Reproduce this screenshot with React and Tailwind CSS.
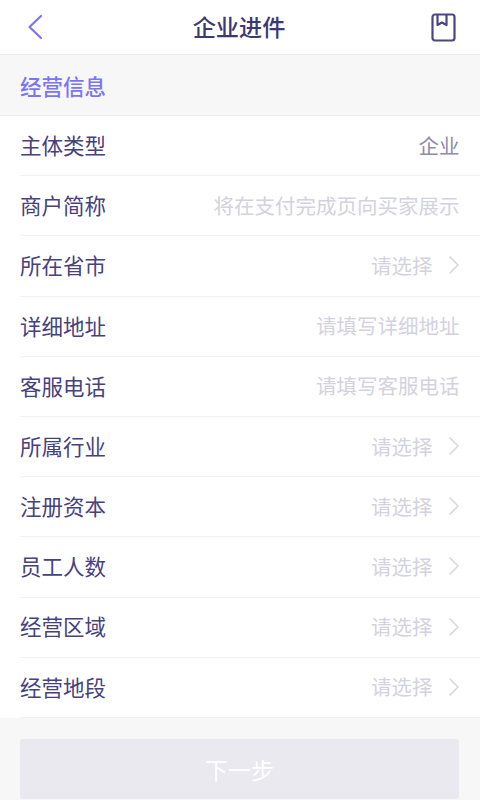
const rows = [
  { label: '主体类型', value: '企业', filled: true },
  { label: '商户简称', value: '将在支付完成页向买家展示' },
  { label: '所在省市', value: '请选择', arrow: true },
  { label: '详细地址', value: '请填写详细地址' },
  { label: '客服电话', value: '请填写客服电话' },
  { label: '所属行业', value: '请选择', arrow: true },
  { label: '注册资本', value: '请选择', arrow: true },
  { label: '员工人数', value: '请选择', arrow: true },
  { label: '经营区域', value: '请选择', arrow: true },
  { label: '经营地段', value: '请选择', arrow: true },
]

function Row({ label, value, filled, arrow }) {
  return (
    <div className="h-[60.2px] ml-5 pr-[20.5px] pb-[1px] flex items-center justify-between border-b border-[#f1f1f4]">
      <span className="text-[21.5px] text-[#47417f]">{label}</span>
      <span className={`flex items-center text-[20.5px] ${filled ? 'text-[#8f8ca8]' : 'text-[#d3d2de]'}`}>
        {value}
        {arrow && (
          <svg className="ml-[15px]" width="12" height="20" viewBox="0 0 12 20" fill="none" stroke="#d8d7e2" strokeWidth="1.7" strokeLinecap="round" strokeLinejoin="round">
            <path d="M2 2 L10 10 L2 18" />
          </svg>
        )}
      </span>
    </div>
  )
}

export default function App() {
  return (
    <div className="w-[480px] h-[800px] overflow-hidden flex flex-col bg-[#f7f7f8] font-['Noto_Sans_CJK_SC',sans-serif]">
      <header className="h-[55px] shrink-0 bg-white border-b border-[#ececee] flex items-center justify-between pl-[27px] pr-[24px]">
        <svg className="mr-[4px]" width="16" height="26" viewBox="0 0 16 26" fill="none" stroke="#7b74fb" strokeWidth="2.2" strokeLinecap="round" strokeLinejoin="round">
          <path d="M14 2 L2.5 13 L14 24" />
        </svg>
        <h1 className="text-[23.2px] font-medium text-[#3e3873] pb-[1px]">企业进件</h1>
        <svg width="25" height="29" viewBox="0 0 25 29" fill="none" stroke="#4b4585" strokeWidth="2.2" strokeLinejoin="round">
          <rect x="1.5" y="1.5" width="22" height="26" rx="2.5" />
          <path d="M6.5 1.5 V12 L11 9.5 L15.5 12 V1.5" />
        </svg>
      </header>
      <div className="h-[61px] shrink-0 flex items-center px-5 pt-[2px] border-b border-[#ececee]">
        <span className="text-[21.5px] font-medium text-[#7b74fb]">经营信息</span>
      </div>
      <div className="bg-white shrink-0">
        {rows.map((row) => (
          <Row key={row.label} {...row} />
        ))}
      </div>
      <div className="pl-5 pr-[21px] pt-[21px]">
        <button className="w-full h-[60px] rounded-[3px] bg-[#e9e9ef] text-white text-[23px]">下一步</button>
      </div>
    </div>
  )
}
